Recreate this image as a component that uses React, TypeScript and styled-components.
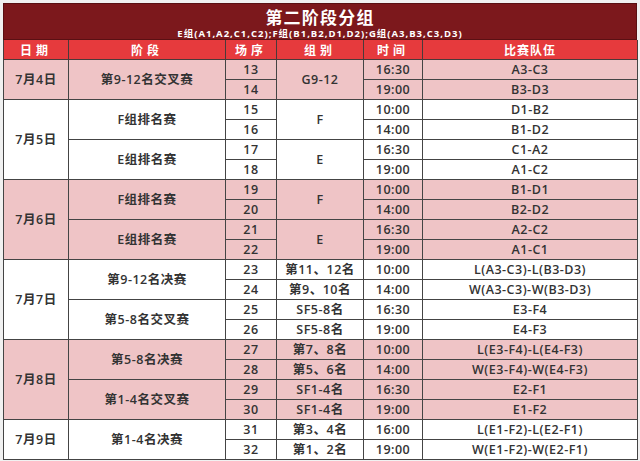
import { styled, createGlobalStyle } from "styled-components";

const GlobalStyle = createGlobalStyle`
  html, body {
    margin: 0;
    padding: 0;
    background: #f1f1f1;
  }
  body {
    font-family: "Open Sans", "Noto Sans CJK SC", sans-serif;
  }
`;

const Page = styled.div`
  width: 634px;
  padding: 3px;
  box-sizing: content-box;
`;

const TitleBar = styled.div`
  height: 37px;
  padding-top: 4px;
  background-color: #7c181c;
  color: white;
  display: flex;
  flex-direction: column;
  align-items: center;
  gap: 2px;
  border: 1px solid #5a1013;
  box-sizing: border-box;
`;

const Title = styled.div`
  font-family: "Noto Sans CJK SC", sans-serif;
  font-size: 17px;
  font-weight: 700;
  letter-spacing: 1.2px;
  line-height: 18px;
`;

const Subtitle = styled.div`
  font-family: "Open Sans", "Noto Sans CJK SC", sans-serif;
  font-size: 9.5px;
  font-weight: 700;
  letter-spacing: 1px;
  line-height: 11px;
`;

const Table = styled.table`
  width: 634px;
  table-layout: fixed;
  border-collapse: collapse;
  color: #333;
`;

const HeadCell = styled.th<{ $spacing?: number }>`
  height: 19px;
  padding: 0;
  background-color: #e63a3d;
  color: white;
  font-family: "Noto Sans CJK SC", sans-serif;
  font-size: 12px;
  font-weight: 700;
  line-height: 16px;
  letter-spacing: ${(p) => p.$spacing ?? 4}px;
  border: 1.5px solid #4a3a3a;
  border-top: 0;
`;

const Row = styled.tr<{ $pink: boolean }>`
  height: 20px;
  background-color: ${(p) => (p.$pink ? "#efc4c6" : "#ffffff")};
`;

const Cell = styled.td`
  padding: 0;
  height: 18px;
  text-align: center;
  font-size: 12.5px;
  font-weight: 600;
  letter-spacing: 0.5px;
  border: 1.5px solid #444;
  white-space: nowrap;
  line-height: 16px;
  overflow: hidden;
`;

type Match = { no: number; group?: string; time: string; teams: string };
type Stage = { name: string; groupSpan?: string; matches: Match[] };
type Day = { date: string; stages: Stage[] };

const days: Day[] = [
  {
    date: "7月4日",
    stages: [
      {
        name: "第9-12名交叉赛",
        groupSpan: "G9-12",
        matches: [
          { no: 13, time: "16:30", teams: "A3-C3" },
          { no: 14, time: "19:00", teams: "B3-D3" },
        ],
      },
    ],
  },
  {
    date: "7月5日",
    stages: [
      {
        name: "F组排名赛",
        groupSpan: "F",
        matches: [
          { no: 15, time: "10:00", teams: "D1-B2" },
          { no: 16, time: "14:00", teams: "B1-D2" },
        ],
      },
      {
        name: "E组排名赛",
        groupSpan: "E",
        matches: [
          { no: 17, time: "16:30", teams: "C1-A2" },
          { no: 18, time: "19:00", teams: "A1-C2" },
        ],
      },
    ],
  },
  {
    date: "7月6日",
    stages: [
      {
        name: "F组排名赛",
        groupSpan: "F",
        matches: [
          { no: 19, time: "10:00", teams: "B1-D1" },
          { no: 20, time: "14:00", teams: "B2-D2" },
        ],
      },
      {
        name: "E组排名赛",
        groupSpan: "E",
        matches: [
          { no: 21, time: "16:30", teams: "A2-C2" },
          { no: 22, time: "19:00", teams: "A1-C1" },
        ],
      },
    ],
  },
  {
    date: "7月7日",
    stages: [
      {
        name: "第9-12名决赛",
        matches: [
          { no: 23, group: "第11、12名", time: "10:00", teams: "L(A3-C3)-L(B3-D3)" },
          { no: 24, group: "第9、10名", time: "14:00", teams: "W(A3-C3)-W(B3-D3)" },
        ],
      },
      {
        name: "第5-8名交叉赛",
        matches: [
          { no: 25, group: "SF5-8名", time: "16:30", teams: "E3-F4" },
          { no: 26, group: "SF5-8名", time: "19:00", teams: "E4-F3" },
        ],
      },
    ],
  },
  {
    date: "7月8日",
    stages: [
      {
        name: "第5-8名决赛",
        matches: [
          { no: 27, group: "第7、8名", time: "10:00", teams: "L(E3-F4)-L(E4-F3)" },
          { no: 28, group: "第5、6名", time: "14:00", teams: "W(E3-F4)-W(E4-F3)" },
        ],
      },
      {
        name: "第1-4名交叉赛",
        matches: [
          { no: 29, group: "SF1-4名", time: "16:30", teams: "E2-F1" },
          { no: 30, group: "SF1-4名", time: "19:00", teams: "E1-F2" },
        ],
      },
    ],
  },
  {
    date: "7月9日",
    stages: [
      {
        name: "第1-4名决赛",
        matches: [
          { no: 31, group: "第3、4名", time: "16:00", teams: "L(E1-F2)-L(E2-F1)" },
          { no: 32, group: "第1、2名", time: "19:00", teams: "W(E1-F2)-W(E2-F1)" },
        ],
      },
    ],
  },
];

export default function App() {
  return (
    <>
      <GlobalStyle />
      <Page>
        <TitleBar>
          <Title>第二阶段分组</Title>
          <Subtitle>E组(A1,A2,C1,C2);F组(B1,B2,D1,D2);G组(A3,B3,C3,D3)</Subtitle>
        </TitleBar>
        <Table>
          <colgroup>
            <col style={{ width: 65 }} />
            <col style={{ width: 157 }} />
            <col style={{ width: 51 }} />
            <col style={{ width: 87 }} />
            <col style={{ width: 59 }} />
            <col style={{ width: 215 }} />
          </colgroup>
          <thead>
            <tr>
              <HeadCell>日期</HeadCell>
              <HeadCell>阶段</HeadCell>
              <HeadCell>场序</HeadCell>
              <HeadCell>组别</HeadCell>
              <HeadCell>时间</HeadCell>
              <HeadCell $spacing={1}>比赛队伍</HeadCell>
            </tr>
          </thead>
          <tbody>
            {days.map((day, di) => {
              const dayRows = day.stages.reduce((n, s) => n + s.matches.length, 0);
              return day.stages.map((stage, si) =>
                stage.matches.map((m, mi) => (
                  <Row key={m.no} $pink={di % 2 === 0}>
                    {si === 0 && mi === 0 && <Cell rowSpan={dayRows}>{day.date}</Cell>}
                    {mi === 0 && <Cell rowSpan={stage.matches.length}>{stage.name}</Cell>}
                    <Cell>{m.no}</Cell>
                    {stage.groupSpan ? (
                      mi === 0 && <Cell rowSpan={stage.matches.length}>{stage.groupSpan}</Cell>
                    ) : (
                      <Cell>{m.group}</Cell>
                    )}
                    <Cell>{m.time}</Cell>
                    <Cell>{m.teams}</Cell>
                  </Row>
                ))
              );
            })}
          </tbody>
        </Table>
      </Page>
    </>
  );
}
